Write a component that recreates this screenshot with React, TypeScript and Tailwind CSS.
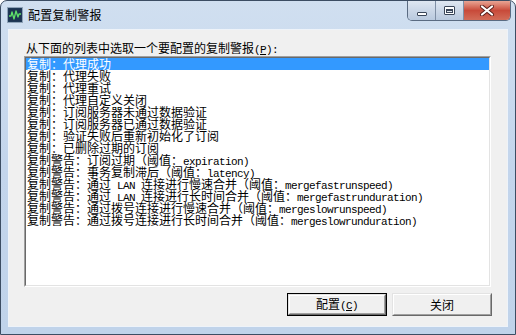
import React from "react";

const items: string[] = [
  "复制：代理成功",
  "复制：代理失败",
  "复制：代理重试",
  "复制：代理自定义关闭",
  "复制：订阅服务器未通过数据验证",
  "复制：订阅服务器已通过数据验证",
  "复制：验证失败后重新初始化了订阅",
  "复制：已删除过期的订阅",
  "复制警告：订阅过期（阈值：expiration)",
  "复制警告：事务复制滞后（阈值：latency)",
  "复制警告：通过 LAN 连接进行慢速合并（阈值：mergefastrunspeed)",
  "复制警告：通过 LAN 连接进行长时间合并（阈值：mergefastrunduration)",
  "复制警告：通过拨号连接进行慢速合并（阈值：mergeslowrunspeed)",
  "复制警告：通过拨号连接进行长时间合并（阈值：mergeslowrunduration)",
];

const mono = "font-['Liberation_Mono',monospace] text-[11px] tracking-[-0.6px] whitespace-pre";

function Mixed({ text }: { text: string }) {
  const parts = text.split(/([\x20-\x7e]+)/);
  return (
    <>
      {parts.map((p, i) =>
        /^[\x20-\x7e]+$/.test(p) ? (
          <span key={i} className={mono}>
            {p}
          </span>
        ) : (
          <span key={i}>{p}</span>
        )
      )}
    </>
  );
}

function AppIcon() {
  return (
    <svg width="16" height="16" viewBox="0 0 16 16">
      <rect x="0.5" y="0.5" width="15" height="15" fill="#23405e" stroke="#8fa3b8" />
      <rect x="1.5" y="1.5" width="13" height="13" fill="#1c3350" />
      <polyline
        points="2,9 4,9 5,5 7,12 9,4 11,10 12,7 14,7"
        fill="none"
        stroke="#5fe06a"
        strokeWidth="1.3"
        strokeLinejoin="round"
      />
    </svg>
  );
}

export default function App() {
  return (
    <div className="w-[516px] h-[335px] bg-white font-['Noto_Sans_CJK_SC',sans-serif] text-[12px] leading-[12px] text-black">
      <div className="w-full h-full flex flex-col border border-[#3c4d63] rounded-t-[7px] bg-gradient-to-b from-[#d0dff0] via-[#c3d5ec] to-[#c0d3ea] overflow-hidden">
        {/* title bar */}
        <div className="h-[28px] flex shrink-0">
          <div className="flex items-center pl-[6px] h-[28px] gap-[5px]">
            <AppIcon />
            <span className="text-[12px] leading-[14px] tracking-[0.3px] text-black">配置复制警报</span>
          </div>
          <div className="ml-auto mr-[4px] flex h-[20px] rounded-b-[5px] border border-t-0 border-[#5a6b82] overflow-hidden">
            <div className="w-[28px] h-full bg-gradient-to-b from-[#dfe7f1] via-[#cbd7e7] to-[#b9c9de] border-r border-[#7f8fa5] flex items-end justify-center pb-[4px]">
              <div className="w-[10px] h-[4px] bg-white border border-[#3a4658] rounded-[1px]" />
            </div>
            <div className="w-[28px] h-full bg-gradient-to-b from-[#dfe7f1] via-[#cbd7e7] to-[#b9c9de] border-r border-[#7f8fa5] flex items-center justify-center">
              <div className="w-[11px] h-[9px] border border-[#3a4658] bg-white rounded-[1px] flex items-center justify-center">
                <div className="w-[7px] h-[4px] border border-[#3a4658] border-t-2 bg-[#dfe6ef]" />
              </div>
            </div>
            <div className="w-[46px] h-full bg-gradient-to-b from-[#e8a494] via-[#c84a3a] to-[#d26c58] flex items-center justify-center">
              <svg width="16" height="11" viewBox="0 0 16 11">
                <path d="M3 1.5 L13 9.5 M13 1.5 L3 9.5" stroke="#5a1f1a" strokeWidth="4" strokeLinecap="round" />
                <path d="M3 1.5 L13 9.5 M13 1.5 L3 9.5" stroke="#ffffff" strokeWidth="2.2" strokeLinecap="round" />
              </svg>
            </div>
          </div>
        </div>

        {/* client area */}
        <div className="flex-1 px-[7px] pb-[7px]">
          <div className="h-full bg-[#f0f0f0] border border-[#eef3f9] flex flex-col">
            <div className="ml-[17px] mt-[11px] leading-[14px] h-[14px] whitespace-nowrap">
              从下面的列表中选取一个要配置的复制警报
              <span className={mono}>
                (<span className="underline">P</span>):
              </span>
            </div>
            <div className="ml-[15px] mt-[1px] w-[467px] h-[231px] border border-t-[#a0a0a0] border-l-[#a0a0a0] border-r-white border-b-white">
              <div className="w-full h-full border border-t-[#696969] border-l-[#696969] border-r-[#e3e3e3] border-b-[#e3e3e3] bg-white flex flex-col">
                {items.map((t, i) => (
                  <div
                    key={i}
                    className={
                      "h-[12px] leading-[12px] pl-[1px] whitespace-nowrap " +
                      (i === 0 ? "bg-[#3399ff] text-white" : "text-black")
                    }
                  >
                    <Mixed text={t} />
                  </div>
                ))}
              </div>
            </div>
            <div className="mt-[6px] mr-[15px] flex justify-end gap-[5px]">
              <div className="w-[100px] h-[23px] border border-black">
                <div className="w-full h-full border border-t-[#e3e3e3] border-l-[#e3e3e3] border-r-[#696969] border-b-[#696969]">
                  <div className="w-full h-full border border-t-white border-l-white border-r-[#a0a0a0] border-b-[#a0a0a0] bg-[#f0f0f0] flex items-center justify-center">
                    <span className="leading-[12px]">
                      配置<span className={mono}>(<span className="underline">C</span>)</span>
                    </span>
                  </div>
                </div>
              </div>
              <div className="w-[100px] h-[23px] border border-t-[#e3e3e3] border-l-[#e3e3e3] border-r-[#696969] border-b-[#696969]">
                <div className="w-full h-full border border-t-white border-l-white border-r-[#a0a0a0] border-b-[#a0a0a0] bg-[#f0f0f0] flex items-center justify-center">
                  <span className="leading-[12px]">关闭</span>
                </div>
              </div>
            </div>
          </div>
        </div>
      </div>
    </div>
  );
}
